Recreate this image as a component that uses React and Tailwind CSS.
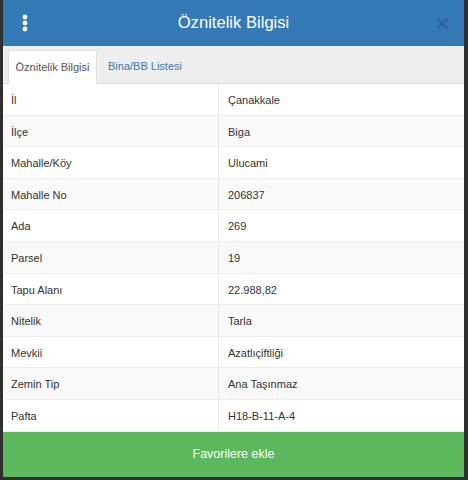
export default function App() {
  const rows = [
    ["İl", "Çanakkale"],
    ["İlçe", "Biga"],
    ["Mahalle/Köy", "Ulucami"],
    ["Mahalle No", "206837"],
    ["Ada", "269"],
    ["Parsel", "19"],
    ["Tapu Alanı", "22.988,82"],
    ["Nitelik", "Tarla"],
    ["Mevkii", "Azatlıçiftliği"],
    ["Zemin Tip", "Ana Taşınmaz"],
    ["Pafta", "H18-B-11-A-4"],
  ];
  return (
    <div
      className="w-[468px] h-[480px] bg-[#2f2f2f] pl-[3px] pr-[4px] pb-[3px] flex flex-col"
      style={{ fontFamily: '"Liberation Sans", Arial, sans-serif' }}
    >
      <div className="h-[46px] bg-[#337ab7] flex items-center relative shrink-0">
        <div className="w-[44px] flex justify-center">
          <svg width="6" height="18" viewBox="0 0 6 18">
            <circle cx="3" cy="3" r="2.4" fill="#fff" />
            <circle cx="3" cy="9" r="2.4" fill="#fff" />
            <circle cx="3" cy="15" r="2.4" fill="#fff" />
          </svg>
        </div>
        <div className="flex-1 text-center text-white text-[16.6px] leading-none">Öznitelik Bilgisi</div>
        <div className="w-[44px] flex justify-center">
          <svg width="11" height="11" viewBox="0 0 11 11">
            <path d="M1.5 1.5 L9.5 9.5 M9.5 1.5 L1.5 9.5" stroke="#2b68a0" strokeWidth="2.6" strokeLinecap="round" />
          </svg>
        </div>
      </div>
      <div className="h-[38px] bg-[#eeeeee] flex items-end pl-[5px] border-b border-[#dddddd] shrink-0">
        <div className="h-[34px] w-[89px] bg-white border-x border-t border-[#e2e2e2] flex items-center justify-center text-[11px] text-[#555555] -mb-px">
          Öznitelik Bilgisi
        </div>
        <div className="h-[34px] px-[11px] flex items-center text-[11px] text-[#337ab7]">Bina/BB Listesi</div>
      </div>
      <div className="flex flex-col bg-white">
        {rows.map(([k, v], i) => (
          <div
            key={k}
            className={`h-[31.6px] flex text-[11px] text-[#333333] border-b border-[#eeeeee] pt-[2px] ${i % 2 === 1 ? "bg-[#f9f9f9]" : "bg-white"}`}
          >
            <div className="w-[216px] pl-[8px] flex items-center border-r border-[#e6e6e6] -mt-[2px]">
              <span className="pt-[2px]">{k}</span>
            </div>
            <div className="flex-1 pl-[9px] flex items-center">{v}</div>
          </div>
        ))}
      </div>
      <div className="flex-1 bg-[#5cb85c] flex items-center justify-center text-white text-[12.5px]">Favorilere ekle</div>
    </div>
  );
}
